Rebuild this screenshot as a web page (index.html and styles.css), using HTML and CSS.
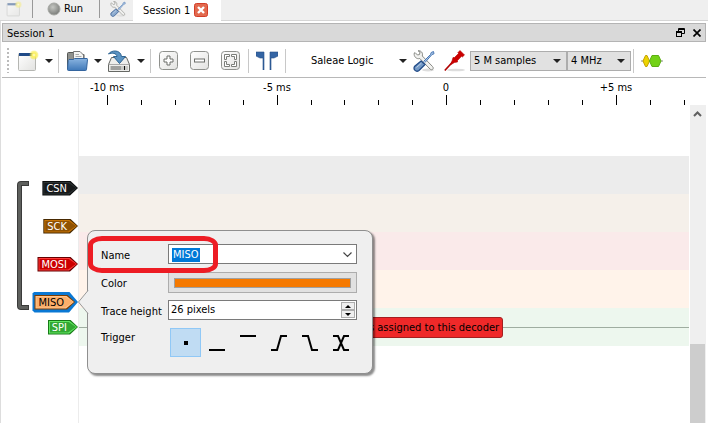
FILE: index.html
```html
<!DOCTYPE html>
<html lang="en">
<head>
<meta charset="utf-8">
<title>Session 1</title>
<link rel="stylesheet" href="styles.css">
</head>
<body>
<svg class="defs" aria-hidden="true">
  <defs>
    <linearGradient id="blue" x1="0" y1="0" x2="0" y2="1"><stop offset="0" stop-color="#8ab4e0"/><stop offset="1" stop-color="#3f78b8"/></linearGradient>
    <linearGradient id="paper" x1="0" y1="0" x2="1" y2="1"><stop offset="0" stop-color="#fff"/><stop offset="1" stop-color="#e2e2e0"/></linearGradient>
    <radialGradient id="ball" cx=".4" cy=".35" r=".7"><stop offset="0" stop-color="#c4c6c2"/><stop offset="1" stop-color="#777976"/></radialGradient>
    <radialGradient id="sun"><stop offset="0" stop-color="#fffde0"/><stop offset=".4" stop-color="#fbf060"/><stop offset="1" stop-color="#f7e92c" stop-opacity=".35"/></radialGradient>
    <symbol id="new" viewBox="0 0 22 22">
      <rect x="1.500" y="3.500" width="17" height="17" rx="1" fill="url(#paper)" stroke="#b5b6b2"/>
      <rect x="2" y="3" width="16" height="3" fill="#204a87"/>
      <circle cx="17" cy="5" r="4.500" fill="url(#sun)"/>
    </symbol>
    <symbol id="tools" viewBox="0 0 22 22">
      <ellipse cx="15" cy="20" rx="6" ry="1.500" fill="#ddd"/>
      <path d="M2 2.500 4.500 5 6.500 4.500 7 2 5 .8C8 .3 10.200 2.800 9.300 6L19.500 16.500C21.500 18.500 19 21 17 19L6.800 8.500C3.500 9.500.5 6.500 1.300 3Z" fill="#f1f1ef" stroke="#888a85"/>
      <path d="M10.500 11.500 17.500 4.500 18.200 2.500 20.500 1.500 21 3.800 19 4.500 12 12.500" fill="#a9c5e6" stroke="#4b78b4"/>
      <path d="M8 11 12 14.500 6 20.500C3 22.500 0 19.500 1.500 16.500Z" fill="#7399c6" stroke="#204a87" stroke-width="1.300"/>
      <path d="M3.500 17.500 8.500 13" stroke="#bcd0e8" fill="none"/>
    </symbol>
  </defs>
</svg>

<header class="tabbar">
  <button class="flat faded new-small" aria-label="New session"><svg width="16" height="16"><use href="#new"/></svg></button>
  <span class="sep dark"></span>
  <button class="flat run"><svg width="14" height="14" viewBox="0 0 14 14"><circle cx="7" cy="7" r="6" fill="url(#ball)" stroke="#a5a7a3"/></svg>Run</button>
  <span class="sep dark"></span>
  <button class="flat settings" aria-label="Settings"><svg width="16" height="16"><use href="#tools"/></svg></button>
  <div class="tab">Session 1
    <button class="flat" aria-label="Close tab"><svg width="14" height="14" viewBox="0 0 14 14"><rect x=".5" y=".5" width="13" height="13" rx="2" fill="#e2694e" stroke="#d33d28"/><path d="M4 4 10 10M10 4 4 10" stroke="#fff" stroke-width="2.400"/></svg></button>
  </div>
</header>

<main class="dock">
  <div class="dock-title">
    <span>Session 1</span>
    <button class="flat" aria-label="Float"><svg width="9" height="9" viewBox="0 0 9 9" fill="none" stroke="#000"><path d="M2.500 3V.5H8.500V5.500H6M2 1.500H8"/><rect x=".5" y="3.500" width="5" height="5"/><path d="M0 4.500H6"/></svg></button>
    <button class="flat" aria-label="Close"><svg width="8" height="8" viewBox="0 0 8 8"><path d="M.5.5 7.500 7.500M7.500.5.5 7.500" stroke="#000" stroke-width="1.700"/></svg></button>
  </div>

  <div class="toolbar">
    <span class="grip"></span>
    <button class="flat drop" aria-label="New"><svg width="22" height="22"><use href="#new"/></svg><i class="caret"></i></button>
    <span class="sep"></span>
    <button class="flat drop" aria-label="Open">
      <svg width="22" height="22" viewBox="0 0 22 22">
        <path d="M1.500 19V3.500Q1.500 2.500 2.500 2.500H8L9 4.500H18V19Z" fill="#8f918d" stroke="#555753"/>
        <path d="M7.500 11V1.500H14L17.500 5V11Z" fill="#f4f4f2" stroke="#777"/><path d="M9.500 4.500H13M9.500 6.500H15.500" stroke="#aaa"/>
        <path d="M3 9.500H7.500L8.500 8.500H21Q21.500 8.500 21.500 9.500L20.500 19.500Q20.500 20.500 19.500 20.500H2.500Q1.500 20.500 1.500 19.500L2.200 10.500Z" fill="url(#blue)" stroke="#34659f"/>
      </svg><i class="caret"></i></button>
    <button class="flat drop" aria-label="Save">
      <svg width="24" height="22" viewBox="0 0 24 22">
        <path d="M4.500 7.500H19.500L22.500 14.500V21.500H1.500V14.500Z" fill="#eeeeec" stroke="#666864"/>
        <path d="M2 14.500H22" stroke="#aaa"/><rect x="3" y="16" width="18" height="4" fill="#c9cac6"/><path d="M5 16V20M7 16V20M9 16V20M11 16V20M13 16V20" stroke="#777"/><path d="M17.500 16V20" stroke="#111"/>
        <path d="M1.500 4C4 0 13.500-.8 14.500 6.500H18.500L12.500 13.500 6.500 6.500H10C9.500 3 5 2.500 1.500 4Z" fill="#5b93c2" stroke="#2f6593"/>
      </svg><i class="caret"></i></button>
    <span class="sep"></span>
    <div class="zooms">
      <button class="flat" aria-label="Zoom in"><svg width="19" height="19" viewBox="0 0 19 19"><rect x=".5" y=".5" width="18" height="18" rx="3" fill="url(#paper)" stroke="#8f918d"/><path d="M8 5H11V8H14V11H11V14H8V11H5V8H8Z" fill="#fff" stroke="#6c6e6a"/></svg></button>
      <button class="flat" aria-label="Zoom out"><svg width="19" height="19" viewBox="0 0 19 19"><rect x=".5" y=".5" width="18" height="18" rx="3" fill="url(#paper)" stroke="#8f918d"/><rect x="4.500" y="8" width="10" height="3" fill="#fff" stroke="#6c6e6a"/></svg></button>
      <button class="flat" aria-label="Zoom fit"><svg width="19" height="19" viewBox="0 0 19 19"><rect x=".5" y=".5" width="18" height="18" rx="3" fill="url(#paper)" stroke="#8f918d"/><path d="M3.500 3.500H8.500V5.500H5.500V8.500H3.500ZM15.500 3.500H10.500V5.500H13.500V8.500H15.500ZM3.500 15.500H8.500V13.500H5.500V10.500H3.500ZM15.500 15.500H10.500V13.500H13.500V10.500H15.500Z" fill="#fff" stroke="#7c7e7a"/></svg></button>
    </div>
    <span class="sep"></span>
    <button class="flat cursors" aria-label="Show cursors"><svg width="22" height="19" viewBox="0 0 22 19"><path d="M0 1H8V19H7V7H4L0 5ZM22 1H14V19H15V7H18L22 5Z" fill="#3465a4" stroke="#264f86" stroke-width=".6"/></svg></button>
    <span class="sep"></span>
    <button class="flat device"><span>Saleae Logic</span><i class="caret"></i></button>
    <button class="flat" aria-label="Configure device"><svg width="22" height="22"><use href="#tools"/></svg></button>
    <button class="flat probe" aria-label="Configure channels"><svg width="22" height="22" viewBox="0 0 22 22"><ellipse cx="12" cy="20" rx="9" ry="1.300" fill="#ddd"/><path d="M.8 20.500 9 11.500" stroke="#b00000" stroke-width="1.700"/><path d="M6.500 14.800 8 11 9 7.500 10.500 7.500 14.500 3.500 13.800 2.800 16 .5 20.500 5 18.300 7 17.500 6.300 13.500 10.500 13.500 12 10.500 12.500Z" fill="#cc0000" stroke="#b30000" stroke-width=".6"/></svg></button>
    <div class="combos">
      <label class="combo samples"><select aria-label="Sample count"><option>5 M samples</option></select><i class="caret"></i></label>
      <label class="combo rate"><select aria-label="Sample rate"><option>4 MHz</option></select><i class="caret"></i></label>
    </div>
    <span class="sep"></span>
    <button class="flat decoder" aria-label="Add decoder"><svg width="22" height="14" viewBox="0 0 22 14"><path d="M0 7H22" stroke="#888a85"/><path d="M2 7 4.500 1.500H6L8.500 7 6 12.500H4.500Z" fill="#edd400" stroke="#c4a000"/><path d="M8.500 7 11 1.500H17.500L20 7 17.500 12.500H11Z" fill="#73d216" stroke="#5cae12"/></svg></button>
  </div>

  <div class="view">
    <div class="labels">
      <svg class="bracket" width="12" height="129" viewBox="0 0 12 129"><path d="M12 2.500H4Q2.500 2.500 2.500 4V125Q2.500 126.500 4 126.500H12" fill="none" stroke="#3a3b3a" stroke-width="5"/><path d="M11 2.500H4Q2.500 2.500 2.500 4V125Q2.500 126.500 4 126.500H11" fill="none" stroke="#5e605d" stroke-width="3"/></svg>
      <div class="tags">
        <span class="slot"><span class="tag csn">CSN</span></span>
        <span class="slot"><span class="tag sck">SCK</span></span>
        <span class="slot"><span class="tag mosi">MOSI</span></span>
        <span class="slot"><span class="halo"><span class="tag miso">MISO</span></span></span>
        <span class="slot last"><span class="tag spi">SPI</span></span>
      </div>
    </div>

    <div class="plot">
      <svg class="ruler" height="27">
        <g class="scale"><text x="28" y="13">-10 ms</text><text x="198" y="13">-5 ms</text><text x="367" y="13">0</text><text x="537" y="13">+5 ms</text></g>
        <path d="M28.500 17V27M198.500 17V27M367.500 17V27M537.500 17V27M62.500 22V27M96.500 22V27M130.500 22V27M164.500 22V27M232.500 22V27M265.500 22V27M299.500 22V27M333.500 22V27M401.500 22V27M435.500 22V27M469.500 22V27M503.500 22V27M571.500 22V27M605.500 22V27" stroke="#000"/>
      </svg>
      <div class="traces">
        <div class="row csn-row"></div>
        <div class="row sck-row"></div>
        <div class="row mosi-row"></div>
        <div class="row miso-row"></div>
        <div class="row spi-row"><span class="error">s assigned to this decoder</span></div>
      </div>
    </div>

    <div class="scroll">
      <svg width="15" height="19" viewBox="0 0 15 19"><path d="M4 11 7.500 7.500 11 11" fill="none" stroke="#606060" stroke-width="2"/></svg>
      <div class="thumb"></div>
    </div>
  </div>
</main>

<form class="popup">
  <svg class="pointer" width="11" height="24" viewBox="0 0 11 24"><path d="M10.500 0 .5 12 10.500 24" fill="#efefef"/><path d="M10 .5.5 12 10 23.500" fill="none" stroke="#999"/></svg>
  <label for="name">Name</label>
  <div class="field name"><input id="name" value="MISO"><svg width="9" height="6" viewBox="0 0 9 6"><path d="M.5.5 4.500 4.500 8.500.5" fill="none" stroke="#444" stroke-width="1.200"/></svg></div>
  <label for="color">Color</label>
  <button type="button" id="color" class="color"><span></span></button>
  <label for="height">Trace height</label>
  <div class="field"><input id="height" value="26 pixels"><span class="spin"><button type="button" aria-label="Increase"><i class="up"></i></button><button type="button" aria-label="Decrease"><i class="down"></i></button></span></div>
  <span class="trigger-label">Trigger</span>
  <div class="triggers">
    <button type="button" class="on" aria-label="Ignore"><svg viewBox="0 0 16 16"><rect x="6" y="6" width="4" height="4" fill="#000" stroke="none"/></svg></button>
    <button type="button" aria-label="Low"><svg viewBox="0 0 16 16"><path d="M0 15H16"/></svg></button>
    <button type="button" aria-label="High"><svg viewBox="0 0 16 16"><path d="M0 1H16"/></svg></button>
    <button type="button" aria-label="Rising"><svg viewBox="0 0 16 16"><path d="M0 15H6L10 1H16"/></svg></button>
    <button type="button" aria-label="Falling"><svg viewBox="0 0 16 16"><path d="M0 1H6L10 15H16"/></svg></button>
    <button type="button" aria-label="Change"><svg viewBox="0 0 16 16"><path d="M0 15H5L11 1H16M0 1H5L11 15H16"/></svg></button>
  </div>
  <span class="marker"></span>
</form>
</body>
</html>
```

FILE: styles.css
```css
* { box-sizing: border-box; }

body {
  margin: 0;
  height: 100vh;
  display: flex;
  flex-direction: column;
  overflow: hidden;
  background: #fff;
  color: #000;
  font: 11px/14px "DejaVu Sans Condensed", "Noto Sans", sans-serif;
}

button, input, select { font: inherit; color: inherit; margin: 0; }
svg { display: block; flex: none; }
.defs { position: absolute; width: 0; height: 0; }

.flat {
  display: flex;
  align-items: center;
  padding: 0;
  border: 0;
  background: none;
}

.sep { flex: none; width: 1px; height: 24px; background: #c8c8c8; }
.sep.dark { height: 18px; background: #999; }

.caret {
  border: 4px solid transparent;
  border-top: 4px solid #222;
  border-bottom: 0;
}

/* Main tab bar */
.tabbar {
  flex: none;
  display: flex;
  height: 21px;
  background: #efefef;
  border-bottom: 1px solid #d5d5d5;
}
.tabbar .flat { height: 17px; }
.new-small { width: 32px; padding-left: 6px; }
.faded { opacity: .5; }
.run { width: 66px; padding-left: 14px; gap: 3px; }
.settings { width: 33px; padding-left: 10px; }
.settings svg { opacity: .8; }
.tab {
  display: flex;
  align-items: center;
  gap: 4px;
  height: 21px;
  padding: 0 13px 0 10px;
  background: #fff;
}
.tab .flat { height: 21px; padding-bottom: 2px; }

/* Session dock */
.dock {
  flex: 1;
  display: flex;
  flex-direction: column;
  min-height: 0;
  padding: 2px 2px 0 1px;
  border-left: 1px solid #ddd;
}
.dock-title {
  flex: none;
  display: flex;
  align-items: center;
  gap: 8px;
  height: 19px;
  padding: 0 4px;
  background: #d9d9d9;
  border: 1px solid #b4b4b4;
}
.dock-title span { flex: 1; padding-top: 2px; }

.toolbar {
  flex: none;
  display: flex;
  align-items: center;
  height: 36px;
  padding: 2px 0 0 5px;
  border-bottom: 1px solid #b8b8b8;
}
.grip {
  width: 2px;
  height: 25px;
  margin-right: 8px;
  background: repeating-linear-gradient(#bbb 0 2px, transparent 2px 4px);
}
.drop { gap: 6px; margin-right: 5px; }
.sep + .drop { margin-left: 7px; }
.zooms { display: flex; gap: 12px; margin: 0 8px; }
.cursors { margin: 0 7px; }
.device { width: 121px; margin-right: 6px; justify-content: space-between; padding-left: 25px; }
.probe { margin: 0 4px 0 9px; }
.combos { display: flex; margin-right: 2px; }
.combo { display: flex; align-items: center; }
.combo select {
  appearance: none;
  width: 100%;
  height: 20px;
  padding: 1px 3px 0;
  border: 1px solid #adadad;
  border-radius: 0;
  background: #e1e1e1;
}
.combo .caret { margin-left: -14px; margin-right: 6px; pointer-events: none; }
.samples { width: 97px; }
.rate { width: 64px; }
.decoder { margin-left: 7px; }

/* Trace view */
.view { flex: 1; display: flex; min-height: 0; }
.labels {
  flex: none;
  display: flex;
  justify-content: space-between;
  align-items: flex-start;
  width: 77px;
  padding: 91px 0 0 15px;
  border-right: 1px solid #ececec;
}
.bracket { margin-top: 12px; }
.tags { display: flex; flex-direction: column; align-items: flex-end; }
.slot { display: flex; align-items: center; height: 38px; }
.slot.last { height: 12px; }

.tag {
  --point: polygon(0 0, calc(100% - 8px) 0, 100% 50%, calc(100% - 8px) 100%, 0 100%);
  position: relative;
  isolation: isolate;
  height: 15px;
  padding: 0 11px 0 4px;
  background: var(--edge);
  clip-path: var(--point);
  color: #fff;
  line-height: 16px;
}
.tag::before, .tag::after {
  content: "";
  position: absolute;
  z-index: -1;
  clip-path: var(--point);
}
.tag::before { inset: 1px; background: var(--rim); }
.tag::after { inset: 2px; background: var(--fill); }
.csn { --edge: #0a0c0d; --rim: #2b3233; --fill: #16191a; }
.sck { --edge: #472901; --rim: #c87404; --fill: #8f5202; }
.mosi { --edge: #660000; --rim: #ff3a3a; --fill: #cc0000; }
.miso { --edge: #7c3d00; --rim: #ffc48e; --fill: #fcaf6a; color: #000; }
.spi { --edge: #177a17; --rim: #62e862; --fill: #33a833; }
.halo {
  padding: 3px 3px 3px 2px;
  background: #0a78d4;
  clip-path: polygon(0 2px, 2px 0, calc(100% - 9px) 0, 100% 50%, calc(100% - 9px) 100%, 2px 100%, 0 calc(100% - 2px));
}
.halo .tag { display: block; }

.plot { flex: 1; min-width: 0; }
.ruler { width: 100%; }
.scale { text-anchor: middle; }
.traces { padding-top: 51px; }
.row { height: 38px; }
.csn-row { background: #ececec; }
.sck-row { background: #f5f0ea; }
.mosi-row { background: #faeaea; }
.miso-row { background: #fff3ea; }
.spi-row {
  display: flex;
  align-items: center;
  padding-left: 282px;
  background: linear-gradient(#9fada0, #9fada0) 0 19px / 100% 1px no-repeat #edf7ee;
}
.error {
  padding: 2px 3px 1px 7px;
  border: 1px solid #a42020;
  border-radius: 3px;
  background: #ef2929;
  line-height: 16px;
  white-space: nowrap;
}

.scroll {
  flex: none;
  display: flex;
  flex-direction: column;
  justify-content: space-between;
  width: 16px;
  margin: 27px 0 0 1px;
  background: #efefef;
}
.thumb { width: 15px; height: 25%; background: #cdcdcd; }

/* Channel popup */
.popup {
  position: absolute;
  left: 87px;
  top: 230px;
  display: grid;
  grid-template-columns: 67px 189px;
  grid-template-rows: 20px 20px 20px 29px;
  row-gap: 8px;
  align-items: center;
  padding: 13px 15px 16px 13px;
  border: 1px solid #8f8f8f;
  border-radius: 8px;
  background: #efefef;
  box-shadow: 2px 2px 2px rgba(0, 0, 0, .45);
}
.popup label, .trigger-label { padding-top: 3px; }
.pointer { position: absolute; left: -10px; top: 59px; }
.marker {
  position: absolute;
  left: 0;
  top: 5px;
  width: 130px;
  height: 37px;
  border: 5px solid #ed1c24;
  border-radius: 14px / 9px;
  pointer-events: none;
}
.trigger-label { align-self: start; }

.field {
  display: flex;
  align-items: center;
  height: 20px;
  padding: 1px;
  border: 1px solid #7a7a7a;
  background: #fff;
}
.field input {
  flex: 1;
  min-width: 0;
  height: 14px;
  padding: 0 1px;
  border: 0;
  background: none;
}
.name { padding: 1px 4px 0 3px; }
.name input {
  color: #fff;
  background: linear-gradient(#0078d7, #0078d7) 0 0 / 28px 100% no-repeat;
}
.color { height: 21px; padding: 5px; border: 1px solid #adadad; background: #e1e1e1; }
.color span { display: block; height: 10px; border: 1px solid #a0a0a0; background: #f57900; }

.spin { display: flex; flex-direction: column; width: 14px; }
.spin button {
  display: flex;
  align-items: center;
  justify-content: center;
  height: 8px;
  padding: 0;
  border: 1px solid #adadad;
  background: #efefef;
}
.up, .down { border: 3px solid transparent; }
.up { border-top: 0; border-bottom-color: #000; }
.down { border-bottom: 0; border-top-color: #000; }

.triggers { display: flex; padding-left: 2px; }
.triggers button {
  display: flex;
  align-items: center;
  justify-content: center;
  width: 31px;
  height: 29px;
  padding: 0;
  border: 1px solid transparent;
  background: none;
}
.triggers .on { border-color: #90c8f6; background: #c0dcf3; }
.triggers svg { width: 16px; height: 16px; fill: none; stroke: #000; stroke-width: 2; }
```
